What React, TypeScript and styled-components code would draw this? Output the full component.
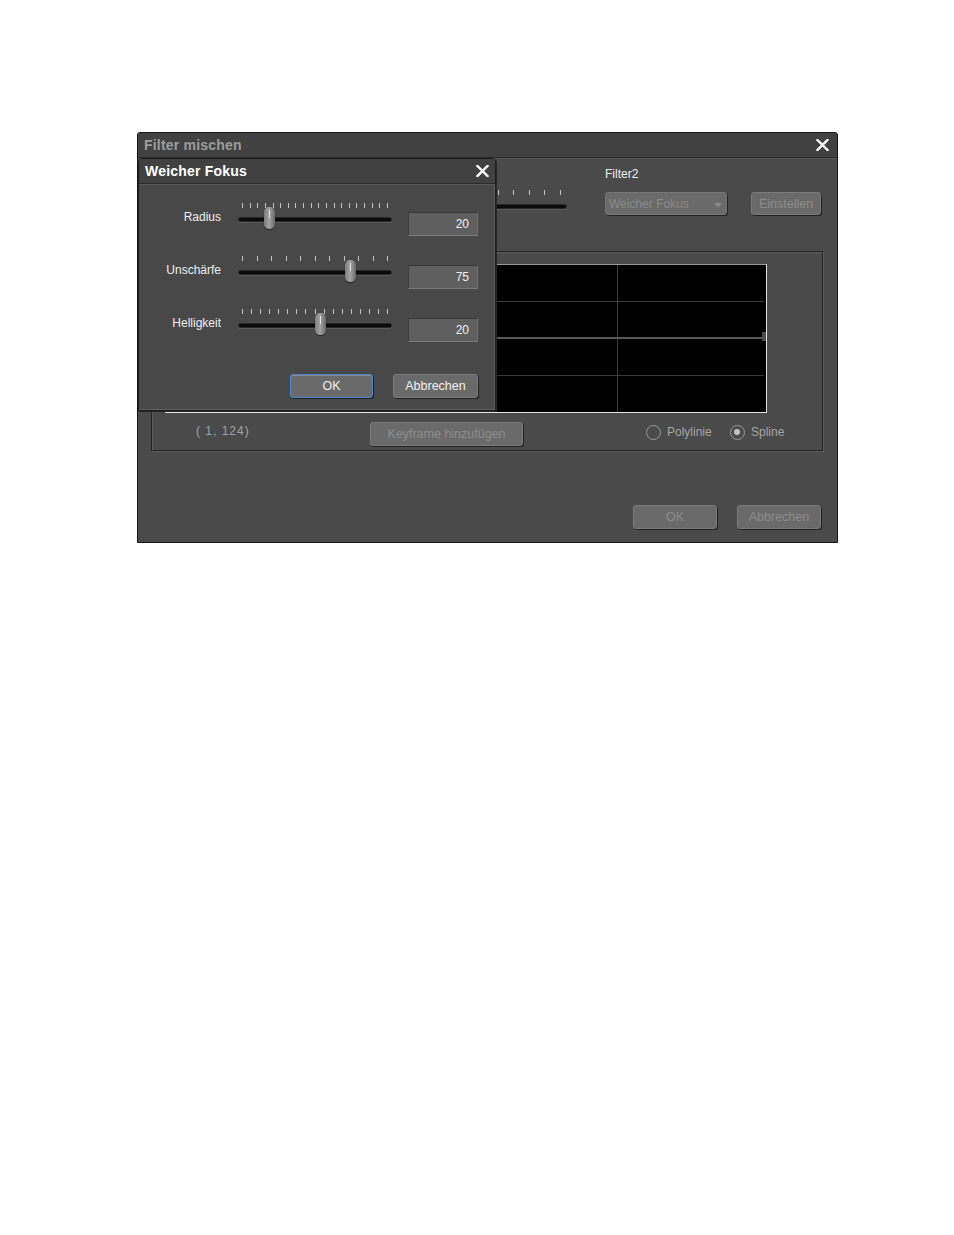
import React from "react";
import styled, { createGlobalStyle, css } from "styled-components";

const GlobalStyle = createGlobalStyle`
  html, body {
    margin: 0;
    padding: 0;
    background: #ffffff;
  }
  body {
    font-family: "Liberation Sans", Arial, sans-serif;
    font-size: 12px;
  }
  * {
    box-sizing: border-box;
  }
`;

const SPage = styled.div`
  position: relative;
  width: 954px;
  height: 1235px;
  padding: 132px 0 0 137px;
`;

const SWindow = styled.div`
  width: 701px;
  height: 411px;
  display: flex;
  flex-direction: column;
  background: #4a4a4a;
  border: 1px solid #161616;
  border-radius: 3px 3px 0 0;
`;

const STitleBar = styled.div<{ $active?: boolean }>`
  height: 25px;
  flex: none;
  display: flex;
  align-items: center;
  justify-content: space-between;
  padding: 0 ${(p) => (p.$active ? "6px" : "8px")} 0 6px;
  background: #414141;
  border-bottom: 1px solid #2a2a2a;
  border-radius: 3px 3px 0 0;
  font-size: 14px;
  font-weight: bold;
  letter-spacing: 0.2px;
  color: ${(p) => (p.$active ? "#ffffff" : "#9d9d9d")};
`;

const SClose = styled.svg`
  width: 13px;
  height: 12px;
  display: block;
`;

const SBody = styled.div`
  flex: 1;
  display: flex;
  flex-direction: column;
  padding: 9px 16px 13px 13px;
  box-shadow: inset 0 1px 0 #575757;
`;

const STopRow = styled.div`
  display: flex;
  align-items: flex-end;
`;

const SFilterCol = styled.div<{ $width: number; $ml?: number }>`
  width: ${(p) => p.$width}px;
  margin-left: ${(p) => p.$ml ?? 0}px;
  display: flex;
  flex-direction: column;
`;

const SLabel = styled.div`
  height: 14px;
  line-height: 14px;
  margin-bottom: 11px;
  color: #efefef;
`;

const SDropdown = styled.div`
  position: relative;
  width: 122px;
  height: 23px;
  line-height: 22px;
  padding-left: 3px;
  background: #6a6a6a;
  border: 1px solid #767676;
  border-radius: 3px;
  box-shadow: 1px 1px 0 #222;
  color: #8b8b8b;
  white-space: nowrap;
  overflow: hidden;
`;

const SArrow = styled.span`
  position: absolute;
  right: 4px;
  top: 10px;
  width: 0;
  height: 0;
  border-left: 4px solid transparent;
  border-right: 4px solid transparent;
  border-top: 4px solid #8c8c8c;
`;

const SButton = styled.button<{ $w: number; $focused?: boolean }>`
  width: ${(p) => p.$w}px;
  height: 24px;
  flex: none;
  padding: 0;
  background: #6a6a6a;
  border: 1px solid #7b7b7b;
  border-radius: 3px;
  box-shadow: 1px 1px 0 #202020;
  font-family: "Liberation Sans", Arial, sans-serif;
  font-size: 12.5px;
  color: ${(p) => (p.disabled ? "#8d8d8d" : "#f2f2f2")};
  cursor: default;
  ${(p) =>
    p.$focused &&
    css`
      border-color: #4a86d2;
      box-shadow: 1px 1px 0 #202020, inset 0 1px 0 #8a8a8a;
    `}
`;

const SMixSlider = styled.div`
  position: relative;
  width: 153px;
  height: 20px;
  margin-left: 263px;
  margin-bottom: 5px;
`;

const STicks = styled.div<{ $inset: number }>`
  display: flex;
  justify-content: space-between;
  margin: 0 ${(p) => p.$inset}px;
  height: 5px;
`;

const STick = styled.span`
  width: 1px;
  height: 5px;
  background: #c4c4c4;
`;

const STrack = styled.div<{ $top: number }>`
  margin-top: ${(p) => p.$top}px;
  height: 5px;
  background: #0b0b0b;
  border: 1px solid #262626;
  border-radius: 3px;
  box-shadow: 0 1px 0 #5a5a5a;
`;

const SThumb = styled.div`
  position: absolute;
  top: 4px;
  width: 11px;
  height: 22px;
  border-radius: 5px;
  background: linear-gradient(90deg, #7c7c7c 0%, #a2a2a2 45%, #8a8a8a 70%, #686868 100%);
  box-shadow: 0 1px 1px #222;

  &::after {
    content: "";
    position: absolute;
    left: 5px;
    top: 3px;
    width: 1px;
    height: 8px;
    background: #e6e6e6;
  }
`;

const SGroup = styled.fieldset`
  margin: 36px -2px 0 0;
  height: 200px;
  padding: 12px 0 4px 13px;
  border: 1px solid #232323;
  box-shadow: 1px 1px 0 #5c5c5c, inset 1px 1px 0 #5c5c5c;
  display: flex;
  flex-direction: column;
  min-width: 0;
`;

const SGraph = styled.div`
  width: 602px;
  height: 149px;
  background: #000;
  border-top: 1px solid #9a9a9a;
  border-left: 1px solid #9a9a9a;
  border-right: 1px solid #e2e2e2;
  border-bottom: 1px solid #e2e2e2;
`;

const SGraphRow = styled.div`
  display: flex;
  align-items: center;
  height: 24px;
  margin-top: 9px;
  padding-left: 31px;
`;

const SCoords = styled.div`
  width: 174px;
  margin-top: -7px;
  font-size: 12px;
  letter-spacing: 1px;
  color: #a3a3a3;
  white-space: pre;
`;

const SRadio = styled.label<{ $w: number }>`
  width: ${(p) => p.$w}px;
  display: flex;
  align-items: center;
  gap: 6px;
  margin-top: -4px;
  color: #a6a6a6;
`;

const SRadioCircle = styled.span<{ $checked?: boolean }>`
  position: relative;
  width: 15px;
  height: 15px;
  border-radius: 50%;
  border: 1.5px solid #9a9a9a;
  ${(p) =>
    p.$checked &&
    css`
      &::after {
        content: "";
        position: absolute;
        left: 3px;
        top: 3px;
        width: 6px;
        height: 6px;
        border-radius: 50%;
        background: #c2c2c2;
      }
    `}
`;

const SFooter = styled.div`
  margin-top: auto;
  display: flex;
  justify-content: flex-end;
  gap: 20px;
`;

const SDialog = styled.div`
  position: absolute;
  left: 138px;
  top: 158px;
  width: 358px;
  height: 253px;
  display: flex;
  flex-direction: column;
  background: #484848;
  border: 1px solid #1c1c1c;
  border-radius: 4px 4px 0 0;
  box-shadow: 1px 1px 0 #262626, inset -1px -1px 0 #5f5f5f;
`;

const SDialogBody = styled.div`
  flex: 1;
  display: flex;
  flex-direction: column;
  gap: 20px;
  padding-top: 19px;
  box-shadow: inset 0 1px 0 #585858;
`;

const SParamRow = styled.div`
  display: grid;
  grid-template-columns: 83px 154px 70px;
  column-gap: 16px;
  align-items: start;
  height: 33px;
`;

const SParamLabel = styled.div`
  margin-top: 7px;
  padding-right: 1px;
  line-height: 14px;
  text-align: right;
  color: #efefef;
`;

const SSlider = styled.div`
  position: relative;
  height: 33px;
`;

const SValueBox = styled.div`
  margin-top: 9px;
  height: 24px;
  line-height: 23px;
  padding-right: 8px;
  text-align: right;
  background: #5f5f5f;
  border-top: 1px solid #363636;
  border-left: 1px solid #3e3e3e;
  border-right: 1px solid #727272;
  border-bottom: 1px solid #7c7c7c;
  color: #f2f2f2;
`;

const SDialogFooter = styled.div`
  display: flex;
  justify-content: flex-end;
  gap: 20px;
  margin-top: 12px;
  padding-right: 17px;
`;

const CloseIcon = () => (
  <SClose viewBox="0 0 13 12">
    <path d="M1.5 1 L11.5 11 M11.5 1 L1.5 11" stroke="#ffffff" strokeWidth="2.4" strokeLinecap="square" />
  </SClose>
);

const Ticks = ({ count, inset }: { count: number; inset: number }) => (
  <STicks $inset={inset}>
    {Array.from({ length: count }).map((_, i) => (
      <STick key={i} />
    ))}
  </STicks>
);

const params = [
  { label: "Radius", value: "20", ticks: 20, pos: 0.19 },
  { label: "Unschärfe", value: "75", ticks: 11, pos: 0.745 },
  { label: "Helligkeit", value: "20", ticks: 17, pos: 0.54 },
];

const Graph = () => (
  <SGraph>
    <svg width="600" height="147" viewBox="0 0 600 147" style={{ display: "block" }}>
      {[36.5, 110.5].map((y) => (
        <line key={y} x1="0" x2="598" y1={y} y2={y} stroke="#3b3b3b" strokeWidth="1" />
      ))}
      {[150.5, 300.5, 451.5].map((x) => (
        <line key={x} x1={x} x2={x} y1="0" y2="147" stroke="#3b3b3b" strokeWidth="1" />
      ))}
      <line x1="0" x2="598" y1="73" y2="73" stroke="#585858" strokeWidth="2" />
      <rect x="596" y="67" width="5" height="9" fill="#4c4c4c" />
    </svg>
  </SGraph>
);

export default function App() {
  return (
    <SPage>
      <GlobalStyle />
      <SWindow>
        <STitleBar>
          <span>Filter mischen</span>
          <CloseIcon />
        </STitleBar>
        <SBody>
          <STopRow>
            <SMixSlider>
              <Ticks count={10} inset={6} />
              <STrack $top={9} />
              <SThumb style={{ left: 60 }} />
            </SMixSlider>
            <SFilterCol $width={122} $ml={38}>
              <SLabel>Filter2</SLabel>
              <SDropdown>
                Weicher Fokus
                <SArrow />
              </SDropdown>
            </SFilterCol>
            <SButton $w={70} disabled style={{ marginLeft: 24, height: 23 }}>
              Einstellen
            </SButton>
          </STopRow>

          <SGroup>
            <Graph />
            <SGraphRow>
              <SCoords>( 1, 124)</SCoords>
              <SButton $w={153} disabled>
                Keyframe hinzufügen
              </SButton>
              <span style={{ width: 123 }} />
              <SRadio $w={84}>
                <SRadioCircle />
                Polylinie
              </SRadio>
              <SRadio $w={70}>
                <SRadioCircle $checked />
                Spline
              </SRadio>
            </SGraphRow>
          </SGroup>

          <SFooter>
            <SButton $w={84} disabled>
              OK
            </SButton>
            <SButton $w={84} disabled>
              Abbrechen
            </SButton>
          </SFooter>
        </SBody>
      </SWindow>

      <SDialog>
        <STitleBar $active>
          <span>Weicher Fokus</span>
          <CloseIcon />
        </STitleBar>
        <SDialogBody>
          {params.map((p) => (
            <SParamRow key={p.label}>
              <SParamLabel>{p.label}</SParamLabel>
              <SSlider>
                <Ticks count={p.ticks} inset={4} />
                <STrack $top={9} />
                <SThumb style={{ left: 4 + p.pos * 145 - 5.5 }} />
              </SSlider>
              <SValueBox>{p.value}</SValueBox>
            </SParamRow>
          ))}
          <SDialogFooter>
            <SButton $w={83} $focused>
              OK
            </SButton>
            <SButton $w={85}>Abbrechen</SButton>
          </SDialogFooter>
        </SDialogBody>
      </SDialog>
    </SPage>
  );
}
